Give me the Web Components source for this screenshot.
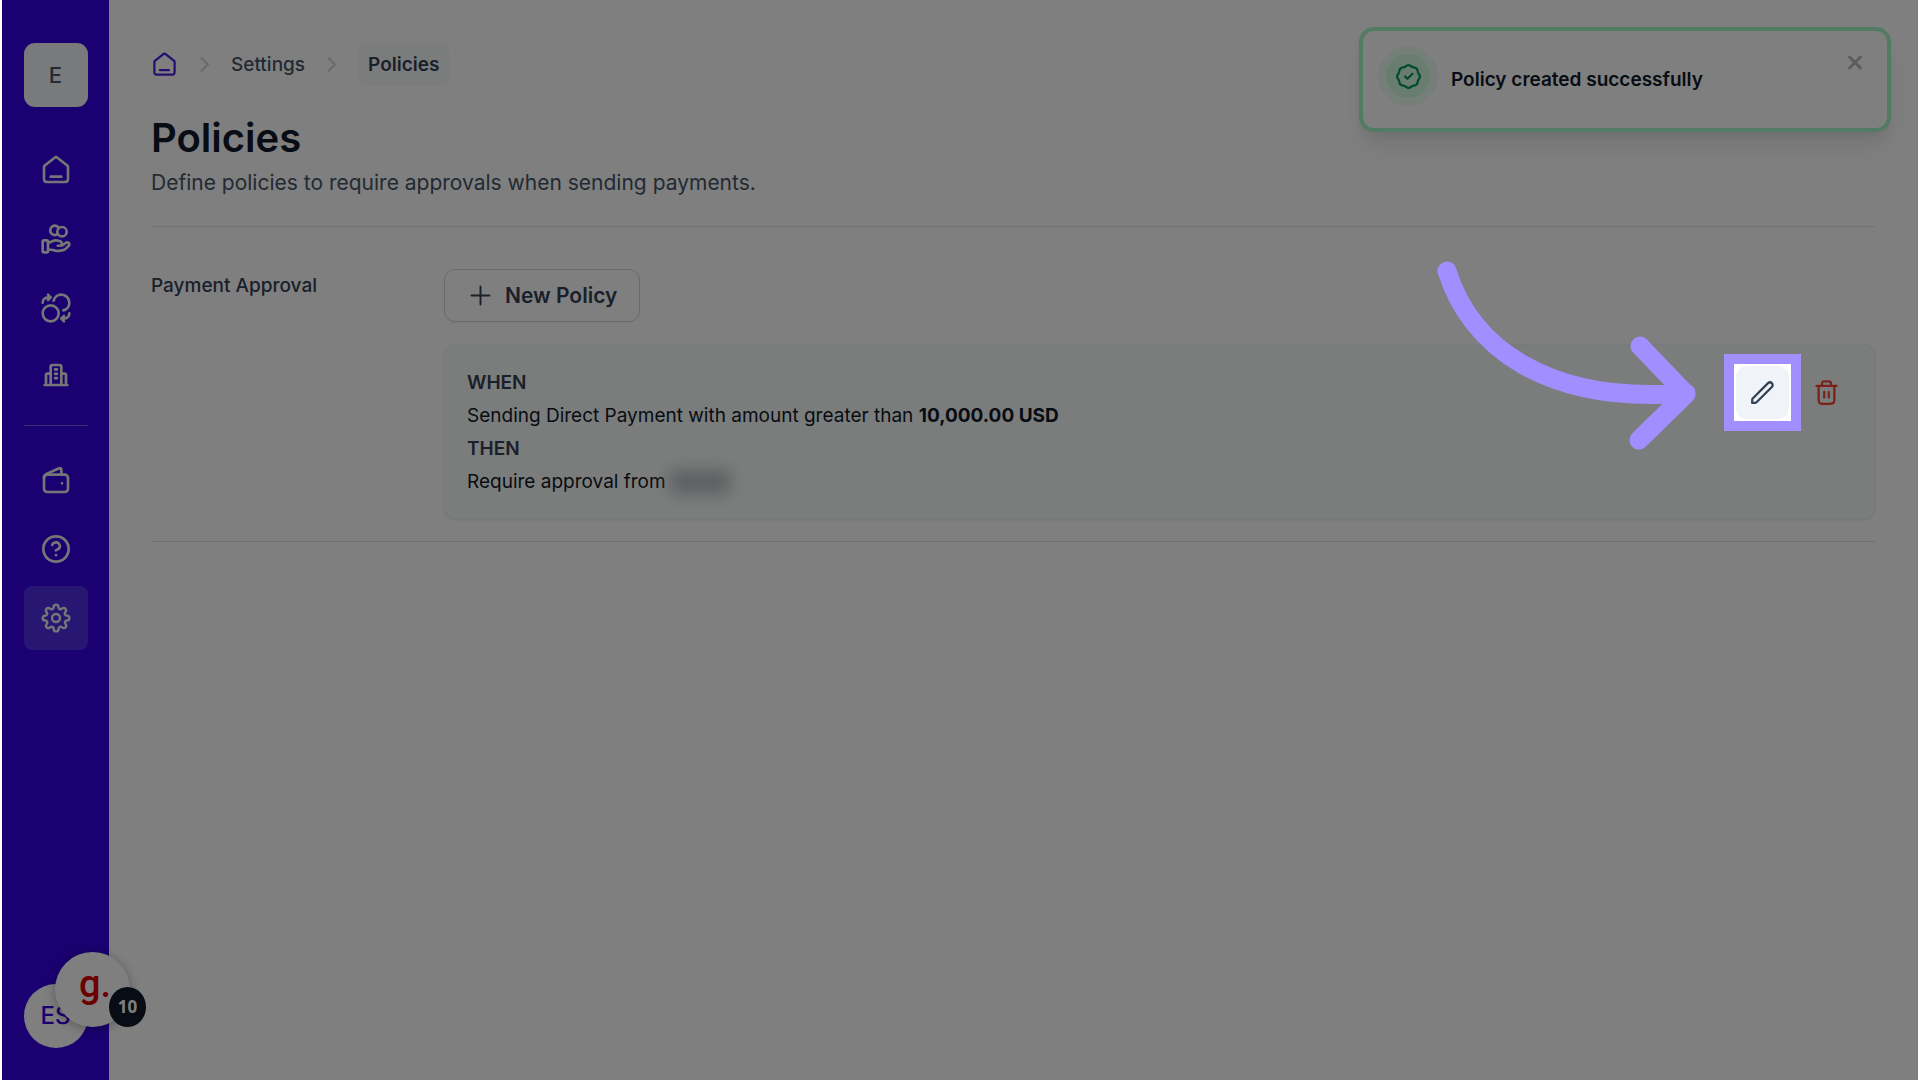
<!DOCTYPE html>
<html lang="en">
<head>
<meta charset="utf-8">
<meta name="viewport" content="width=device-width, initial-scale=1">
<title>Policies</title>
<style>
  body {
    margin: 0;
    background: #fff;
    font-family: Inter, "Liberation Sans", sans-serif;
    color: #101828;
  }
</style>
</head>
<body>
<app-frame>
  <side-bar slot="sidebar"></side-bar>
  <bread-crumb></bread-crumb>
  <page-header heading="Policies">Define policies to require approvals when sending payments.</page-header>
  <settings-section label="Payment Approval">
    <new-button>New Policy</new-button>
    <policy-card>
      <span slot="when">Sending Direct Payment with amount greater than <b>10,000.00 USD</b></span>
      <span slot="then">Require approval from</span>
    </policy-card>
  </settings-section>
  <toast-message slot="overlay">Policy created successfully</toast-message>
  <help-widget slot="overlay" count="10"></help-widget>
</app-frame>

<script>
const ICONS = {
  home: '<path d="M8 17H16M11.0177 2.764L4.23539 8.03912C3.78202 8.39175 3.55534 8.56806 3.39203 8.78886C3.24737 8.98444 3.1396 9.20478 3.07403 9.43905C3 9.70352 3 9.9907 3 10.5651V17.8C3 18.9201 3 19.4801 3.21799 19.908C3.40973 20.2843 3.71569 20.5903 4.09202 20.782C4.51984 21 5.07989 21 6.2 21H17.8C18.9201 21 19.4802 21 19.908 20.782C20.2843 20.5903 20.5903 20.2843 20.782 19.908C21 19.4801 21 18.9201 21 17.8V10.5651C21 9.9907 21 9.70352 20.926 9.43905C20.8604 9.20478 20.7526 8.98444 20.6079 8.78886C20.4447 8.56806 20.218 8.39175 19.7646 8.03913L12.9823 2.764C12.631 2.49075 12.4553 2.35412 12.2613 2.3016C12.0902 2.25526 11.9098 2.25526 11.7387 2.3016C11.5447 2.35412 11.369 2.49075 11.0177 2.764Z"/>',
  coins: '<path d="M6 20.0872H8.61029C8.95063 20.0872 9.28888 20.1277 9.61881 20.2086L12.3769 20.8789C12.9753 21.0247 13.5988 21.0388 14.2035 20.9214L17.253 20.3281C18.0585 20.1712 18.7996 19.7854 19.3803 19.2205L21.5379 17.1217C22.154 16.5234 22.154 15.5524 21.5379 14.9531C20.9832 14.4134 20.1047 14.3527 19.4771 14.8103L16.9626 16.6449C16.6025 16.9081 16.1643 17.0498 15.7137 17.0498H13.2855H14.8311C15.7022 17.0498 16.4079 16.3633 16.4079 15.5159V15.2091C16.4079 14.5055 15.9156 13.892 15.2141 13.7219L12.8286 13.1417C12.4404 13.0476 12.0428 13 11.6431 13C10.6783 13 8.93189 13.7988 8.93189 13.7988L6 15.0249"/><rect x="2" y="13" width="4" height="9" rx="1"/><circle cx="16.5" cy="6.5" r="3.5"/><path d="M13.3 8.3A3.5 3.5 0 1 1 14.2 3.8"/>',
  swap: '<path d="M6 6L8 4M8 4L6 2M8 4H6C3.79086 4 2 5.79086 2 8M18 18L16 20M16 20L18 22M16 20H18C20.2091 20 22 18.2091 22 16M10.189 6.5C10.8551 3.91216 13.2042 2 16 2C19.3137 2 22 4.68629 22 8C22 10.7958 20.0879 13.1449 17.5001 13.811M14 16C14 19.3137 11.3137 22 8 22C4.68629 22 2 19.3137 2 16C2 12.6863 4.68629 10 8 10C11.3137 10 14 12.6863 14 16Z"/>',
  building: '<path d="M3.5 18H20.5M8 18V4.2Q8 3 9.2 3H14.8Q16 3 16 4.2V18M8 9.5H5.7Q4.5 9.5 4.5 10.7V18M16 9.5H18.3Q19.5 9.5 19.5 10.7V18M11.3 6.3H12.7M11.3 9.6H12.7M11.3 12.9H12.7"/>',
  wallet: '<path d="M16.5 14.5H16.51M16 8V4.4C16 3.2 15.4 2.8 14.4 3.2L4.9 7.4C3.6 8 3 8.8 3 10.2"/><rect x="3" y="8" width="18" height="13" rx="2.4"/>',
  help: '<circle cx="12" cy="12" r="9.5"/><path d="M9.09 9C9.32 8.33 9.79 7.77 10.4 7.41C11.01 7.05 11.73 6.92 12.43 7.04C13.13 7.16 13.76 7.52 14.22 8.06C14.67 8.61 14.92 9.29 14.92 10C14.92 12 11.92 13 11.92 13M12 16.6H12.01"/>',
  settings: '<g transform="translate(1.1 1.1) scale(.91)"><circle cx="12" cy="12" r="3.3"/><path d="M19.4 15a1.65 1.65 0 0 0 .33 1.82l.06.06a2 2 0 0 1 0 2.83 2 2 0 0 1-2.83 0l-.06-.06a1.65 1.65 0 0 0-1.82-.33 1.65 1.65 0 0 0-1 1.51V21a2 2 0 0 1-2 2 2 2 0 0 1-2-2v-.09A1.65 1.65 0 0 0 9 19.4a1.65 1.65 0 0 0-1.82.33l-.06.06a2 2 0 0 1-2.83 0 2 2 0 0 1 0-2.83l.06-.06a1.65 1.65 0 0 0 .33-1.82 1.65 1.65 0 0 0-1.51-1H3a2 2 0 0 1-2-2 2 2 0 0 1 2-2h.09A1.65 1.65 0 0 0 4.6 9a1.65 1.65 0 0 0-.33-1.82l-.06-.06a2 2 0 0 1 0-2.83 2 2 0 0 1 2.83 0l.06.06a1.65 1.65 0 0 0 1.82.33H9a1.65 1.65 0 0 0 1-1.51V3a2 2 0 0 1 2-2 2 2 0 0 1 2 2v.09a1.65 1.65 0 0 0 1 1.51 1.65 1.65 0 0 0 1.82-.33l.06-.06a2 2 0 0 1 2.83 0 2 2 0 0 1 0 2.83l-.06.06a1.65 1.65 0 0 0-.33 1.82V9a1.65 1.65 0 0 0 1.51 1H21a2 2 0 0 1 2 2 2 2 0 0 1-2 2h-.09a1.65 1.65 0 0 0-1.51 1z"/></g>',
  chevron: '<path d="M9.5 17.5L15 12L9.5 6.5"/>',
  plus: '<path d="M12 4V20M4 12H20"/>',
  close: '<path d="M6.5 6.5L17.5 17.5M17.5 6.5L6.5 17.5"/>',
  pencil: '<path d="M3.3 17.3L16.9 3.7a2.4 2.4 0 0 1 3.4 3.4L6.7 20.7Q6.3 21.1 5.7 21.15L2.8 21.3L2.9 18.3Q2.9 17.7 3.3 17.3Z"/>',
  trash: '<path d="M16 6V5.2C16 4.08 16 3.52 15.78 3.09C15.59 2.72 15.28 2.41 14.91 2.22C14.48 2 13.92 2 12.8 2H11.2C10.08 2 9.52 2 9.09 2.22C8.72 2.41 8.41 2.72 8.22 3.09C8 3.52 8 4.08 8 5.2V6M10 11.5V16.5M14 11.5V16.5M3 6H21M19 6V17.2C19 18.88 19 19.72 18.67 20.36C18.39 20.93 17.93 21.39 17.36 21.67C16.72 22 15.88 22 14.2 22H9.8C8.12 22 7.28 22 6.64 21.67C6.07 21.39 5.61 20.93 5.33 20.36C5 19.72 5 18.88 5 17.2V6"/>',
  verified: '<path d="M9 12L11 14L15.5 9.5M7.33377 3.8187C8.1376 3.75455 8.90071 3.43846 9.51447 2.91542C10.9467 1.69486 13.0533 1.69486 14.4855 2.91542C15.0993 3.43846 15.8624 3.75455 16.6662 3.8187C18.5421 3.96839 20.0316 5.45794 20.1813 7.33377C20.2455 8.1376 20.5615 8.90071 21.0846 9.51447C22.3051 10.9467 22.3051 13.0533 21.0846 14.4855C20.5615 15.0993 20.2455 15.8624 20.1813 16.6662C20.0316 18.5421 18.5421 20.0316 16.6662 20.1813C15.8624 20.2455 15.0993 20.5615 14.4855 21.0846C13.0533 22.3051 10.9467 22.3051 9.51447 21.0846C8.90071 20.5615 8.1376 20.2455 7.33377 20.1813C5.45794 20.0316 3.96839 18.5421 3.8187 16.6662C3.75455 15.8624 3.43846 15.0993 2.91542 14.4855C1.69486 13.0533 1.69486 10.9467 2.91542 9.51447C3.43846 8.90071 3.75455 8.1376 3.8187 7.33377C3.96839 5.45794 5.45794 3.96839 7.33377 3.8187Z"/>',
};

function render(el, html) {
  const template = document.createElement('template');
  template.innerHTML = html;
  el.attachShadow({ mode: 'open' }).append(template.content.cloneNode(true));
}

class UiIcon extends HTMLElement {
  connectedCallback() {
    if (this.shadowRoot) return;
    const weight = this.getAttribute('weight') || 2;
    render(this, `
      <style>
        :host { display: block; width: 32px; height: 32px; flex: none; }
        svg { display: block; width: 100%; height: 100%; }
      </style>
      <svg viewBox="0 0 24 24" fill="none" stroke="currentColor" stroke-width="${weight}"
        stroke-linecap="round" stroke-linejoin="round" aria-hidden="true">${ICONS[this.getAttribute('name')]}</svg>
    `);
  }
}

class AppFrame extends HTMLElement {
  constructor() {
    super();
    render(this, `
      <style>
        :host { display: block; padding: 0 2px; }
        .frame {
          display: flex;
          position: relative;
          min-height: 100vh;
          overflow: hidden;
          background: #fff;
        }
        main { flex: 1; min-width: 0; padding: 43px 43px 43px 42px; }
      </style>
      <div class="frame">
        <slot name="sidebar"></slot>
        <main><slot></slot></main>
        <slot name="overlay"></slot>
      </div>
    `);
  }
}

class SideBar extends HTMLElement {
  constructor() {
    super();
    const link = (name, label, cls = '') =>
      `<a href="#" class="${cls}" aria-label="${label}"><ui-icon name="${name}"></ui-icon></a>`;
    render(this, `
      <style>
        :host {
          display: flex;
          flex: none;
          flex-direction: column;
          align-items: center;
          box-sizing: border-box;
          width: 107px;
          padding: 43px 0 32px;
          background: #3400e0;
        }
        .org, .user {
          display: flex;
          align-items: center;
          justify-content: center;
          width: 64px;
          height: 64px;
          padding: 0;
          border: 0;
          font: 500 22px/32px Inter, sans-serif;
        }
        .org { background: #f2f4f7; border-radius: 11px; color: #475467; }
        .user { background: #fff; border-radius: 50%; color: #3400e0; font-size: 24px; margin-top: auto; }
        nav { display: flex; flex-direction: column; gap: 5px; margin-top: 31px; }
        a {
          display: flex;
          align-items: center;
          justify-content: center;
          width: 64px;
          height: 64px;
          border-radius: 8px;
          color: #eaecf0;
        }
        a.active { background: #502ce6; }
        hr { width: 64px; height: 1px; margin: 11px 0 17px; border: 0; background: #7a5cf0; }
      </style>
      <button class="org">E</button>
      <nav>
        ${link('home', 'Home')}
        ${link('coins', 'Payments')}
        ${link('swap', 'Exchange')}
        ${link('building', 'Accounts')}
        <hr>
        ${link('wallet', 'Wallet')}
        ${link('help', 'Help')}
        ${link('settings', 'Settings', 'active')}
      </nav>
      <button class="user">ES</button>
    `);
  }
}

class BreadCrumb extends HTMLElement {
  constructor() {
    super();
    render(this, `
      <style>
        :host { display: block; }
        nav { display: flex; align-items: center; gap: 13px; height: 43px; font-size: 19px; line-height: 27px; }
        a { color: #475467; font-weight: 500; text-decoration: none; }
        a.home { color: #4a1fe0; }
        .home ui-icon { width: 27px; height: 27px; }
        nav > ui-icon { width: 27px; height: 27px; color: #d0d5dd; }
        .current {
          padding: 8px 10px;
          border-radius: 8px;
          background: #f7fbfa;
          color: #344054;
          font-weight: 600;
        }
      </style>
      <nav aria-label="Breadcrumb">
        <a class="home" href="#" aria-label="Home"><ui-icon name="home"></ui-icon></a>
        <ui-icon name="chevron"></ui-icon>
        <a href="#">Settings</a>
        <ui-icon name="chevron"></ui-icon>
        <span class="current" aria-current="page">Policies</span>
      </nav>
    `);
  }
}

class PageHeader extends HTMLElement {
  constructor() {
    super();
    render(this, `
      <style>
        :host { display: block; padding: 28px 0 27px; border-bottom: 1px solid #e4e7ec; }
        h1 { margin: 0 0 5px; font-size: 40px; line-height: 48px; font-weight: 600; }
        p { margin: 0; font-size: 21px; line-height: 32px; color: #475467; }
      </style>
      <h1></h1>
      <p><slot></slot></p>
    `);
  }
  connectedCallback() {
    this.shadowRoot.querySelector('h1').textContent = this.getAttribute('heading');
  }
}

class SettingsSection extends HTMLElement {
  constructor() {
    super();
    render(this, `
      <style>
        :host {
          display: grid;
          grid-template-columns: 251px 1fr;
          gap: 42px;
          padding: 42px 0 22px;
          border-bottom: 1px solid #dcdfe5;
        }
        h2 { margin: 0; font-size: 19px; line-height: 33px; font-weight: 500; color: #344054; }
        div { display: flex; flex-direction: column; align-items: flex-start; gap: 22px; min-width: 0; }
      </style>
      <h2></h2>
      <div><slot></slot></div>
    `);
  }
  connectedCallback() {
    this.shadowRoot.querySelector('h2').textContent = this.getAttribute('label');
  }
}

class NewButton extends HTMLElement {
  constructor() {
    super();
    render(this, `
      <style>
        :host { display: block; }
        button {
          display: flex;
          align-items: center;
          gap: 11px;
          height: 53px;
          padding: 0 22px;
          border: 1px solid #d0d5dd;
          border-radius: 11px;
          background: #fff;
          box-shadow: 0 1px 2px rgba(16, 24, 40, .05);
          color: #344054;
          font: 600 21px/32px Inter, sans-serif;
        }
        ui-icon { width: 27px; height: 27px; }
      </style>
      <button><ui-icon name="plus" weight="1.7"></ui-icon><slot></slot></button>
    `);
  }
}

class PolicyCard extends HTMLElement {
  constructor() {
    super();
    render(this, `
      <style>
        :host {
          display: flex;
          align-self: stretch;
          justify-content: space-between;
          padding: 21px 21px 20px 22px;
          border: 1px solid #f0f3f4;
          border-radius: 11px;
          background: #f7fbf9;
          box-shadow: 0 1px 3px rgba(16, 24, 40, .1);
          font-size: 19px;
          line-height: 33px;
        }
        h3 { margin: 0; font-size: inherit; font-weight: 600; color: #344054; }
        p { margin: 0; display: flex; align-items: center; gap: 4px; }
        .redacted { width: 60px; height: 24px; background: #bcbdc4; filter: blur(8px); }
        .actions { display: flex; gap: 11px; }
      </style>
      <div>
        <h3>WHEN</h3>
        <p><slot name="when"></slot></p>
        <h3>THEN</h3>
        <p><slot name="then"></slot><span class="redacted"></span></p>
      </div>
      <div class="actions">
        <spot-light><icon-button name="pencil" label="Edit" active></icon-button></spot-light>
        <icon-button name="trash" label="Delete"></icon-button>
      </div>
    `);
  }
}

class IconButton extends HTMLElement {
  connectedCallback() {
    if (this.shadowRoot) return;
    render(this, `
      <style>
        :host { display: block; color: #f04438; }
        :host([active]) { color: #344054; }
        button {
          display: flex;
          align-items: center;
          justify-content: center;
          width: 53px;
          height: 53px;
          padding: 0;
          border: 0;
          border-radius: 11px;
          background: none;
          color: inherit;
        }
        :host([active]) button { background: #f0f4f8; }
        ui-icon { width: 27px; height: 27px; }
      </style>
      <button aria-label="${this.getAttribute('label')}"><ui-icon name="${this.getAttribute('name')}"></ui-icon></button>
    `);
  }
}

// Frames its content and dims everything else in the app with one wide shadow.
class SpotLight extends HTMLElement {
  constructor() {
    super();
    render(this, `
      <style>
        :host { display: block; position: relative; height: 53px; background: #fff; box-shadow: 0 0 0 3px #fff; }
        .ring {
          position: absolute;
          inset: -12px;
          z-index: 10;
          border: 10px solid #a18fff;
          border-radius: 1px;
          box-shadow: 0 0 0 3000px rgba(0, 0, 0, .5);
          pointer-events: none;
        }
        svg { position: absolute; z-index: 11; left: -300px; top: -106px; width: 260px; height: 190px; pointer-events: none; }
      </style>
      <slot></slot>
      <div class="ring"></div>
      <svg viewBox="0 0 260 190" fill="none" stroke="#a18fff" stroke-width="19" stroke-linecap="round" stroke-linejoin="round" aria-hidden="true">
        <path d="M11 11C34 85 109 145 250 133M204 86L250 134L203 180"/>
      </svg>
    `);
  }
}

class ToastMessage extends HTMLElement {
  constructor() {
    super();
    render(this, `
      <style>
        :host {
          display: flex;
          position: absolute;
          top: 27px;
          right: 27px;
          box-sizing: border-box;
          width: 532px;
          height: 105px;
          padding: 15px 20px 15px 15px;
          border: 4px solid #a6f4c5;
          border-radius: 15px;
          background: #fff;
          box-shadow: 0 16px 24px -4px rgba(16, 24, 40, .1), 0 6px 8px -2px rgba(16, 24, 40, .05);
        }
        .badge {
          display: flex;
          align-items: center;
          justify-content: center;
          box-sizing: border-box;
          width: 60px;
          height: 60px;
          border: 8px solid #ecfdf3;
          border-radius: 50%;
          background: #d1fadf;
          color: #039855;
        }
        .badge ui-icon { width: 27px; height: 27px; }
        p { flex: 1; margin: 18px 0 0 13px; font-size: 19px; line-height: 32px; font-weight: 600; }
        button { height: 27px; margin-top: 3px; padding: 0; border: 0; background: none; color: #b8b8b8; }
        button ui-icon { width: 24px; height: 27px; }
      </style>
      <div class="badge"><ui-icon name="verified"></ui-icon></div>
      <p role="status"><slot></slot></p>
      <button aria-label="Close"><ui-icon name="close" weight="3"></ui-icon></button>
    `);
  }
}

class HelpWidget extends HTMLElement {
  constructor() {
    super();
    render(this, `
      <style>
        :host { display: block; position: absolute; left: 53px; bottom: 53px; }
        button {
          width: 75px;
          height: 75px;
          padding: 0 0 11px 5px;
          border: 0;
          border-radius: 50%;
          background: #fff;
          box-shadow: 0 2px 12px rgba(0, 0, 0, .3);
          color: #d80000;
          font: 500 38px/64px Roboto, sans-serif;
        }
        .count {
          display: flex;
          align-items: center;
          justify-content: center;
          position: absolute;
          left: 54px;
          bottom: 0;
          width: 37px;
          height: 40px;
          border-radius: 50%;
          background: #101828;
          color: #fff;
          font: 700 17px/20px "Noto Sans", sans-serif;
        }
      </style>
      <button>g.</button>
      <span class="count"></span>
    `);
  }
  connectedCallback() {
    this.shadowRoot.querySelector('.count').textContent = this.getAttribute('count');
  }
}

customElements.define('ui-icon', UiIcon);
customElements.define('app-frame', AppFrame);
customElements.define('side-bar', SideBar);
customElements.define('bread-crumb', BreadCrumb);
customElements.define('page-header', PageHeader);
customElements.define('settings-section', SettingsSection);
customElements.define('new-button', NewButton);
customElements.define('icon-button', IconButton);
customElements.define('spot-light', SpotLight);
customElements.define('policy-card', PolicyCard);
customElements.define('toast-message', ToastMessage);
customElements.define('help-widget', HelpWidget);
</script>
</body>
</html>
